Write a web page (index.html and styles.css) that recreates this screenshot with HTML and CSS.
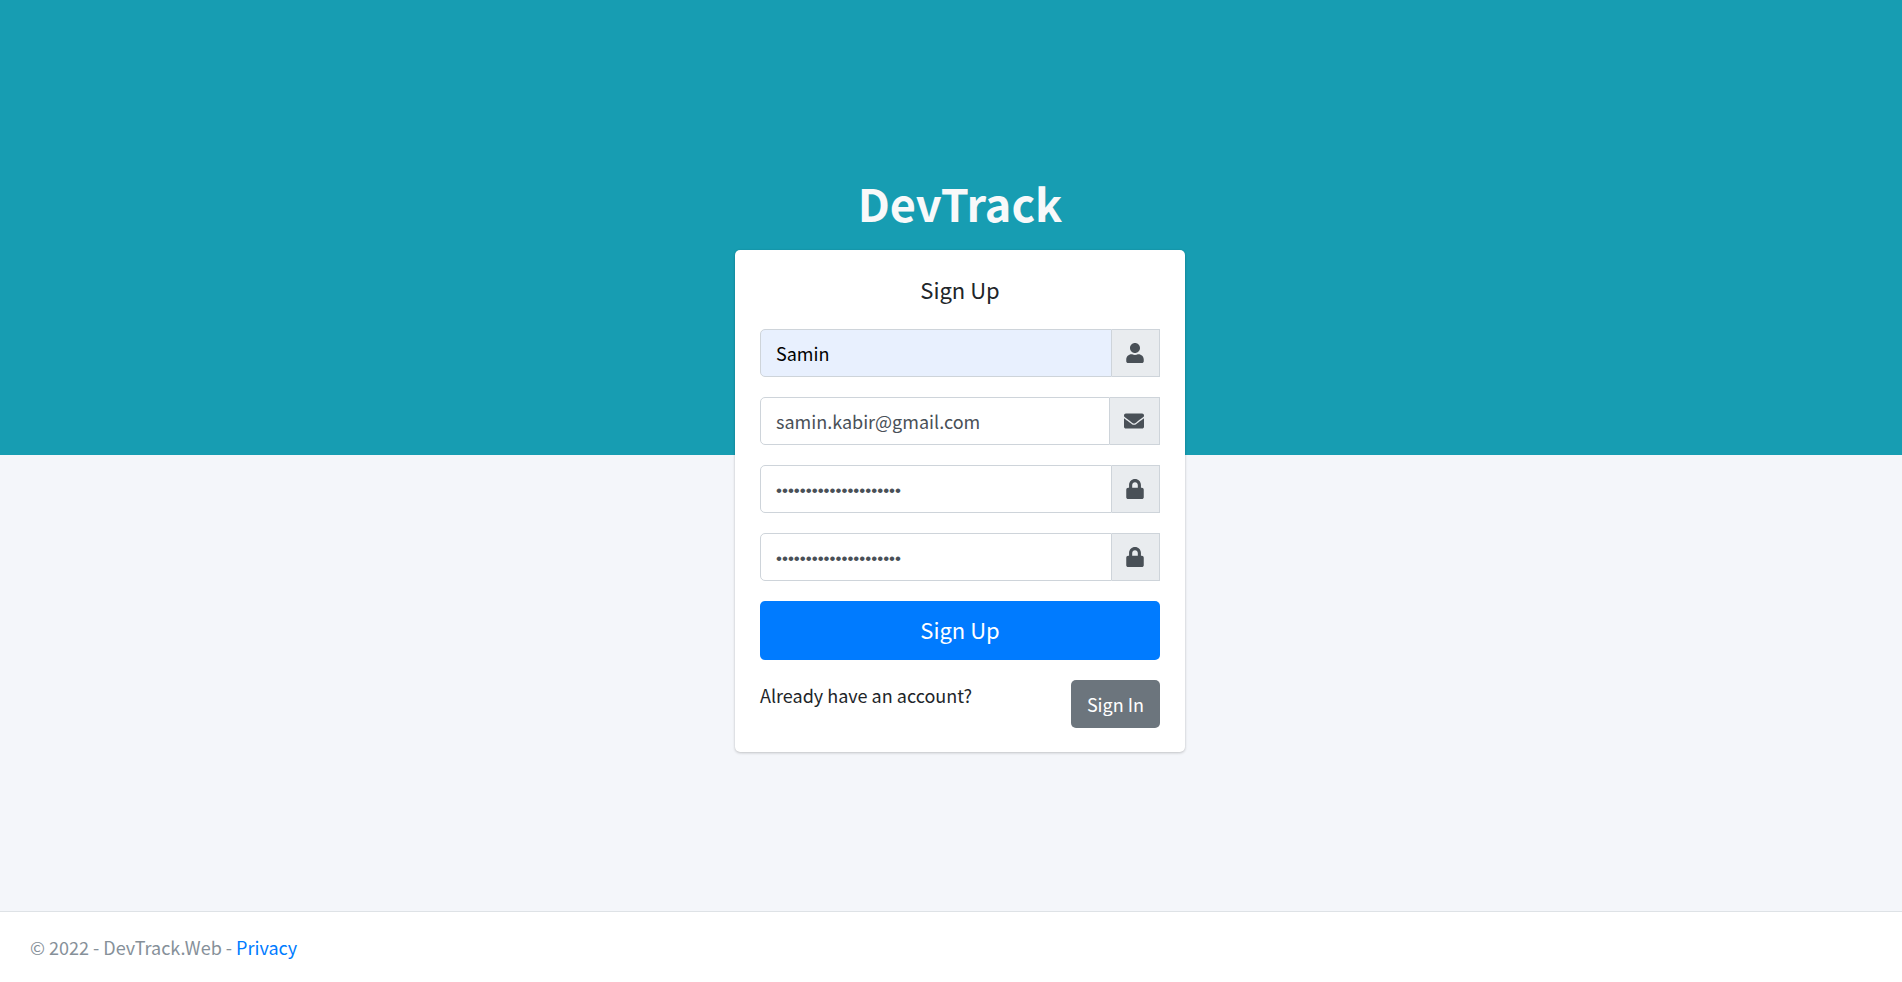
FILE: index.html
```html
<!DOCTYPE html>
<html lang="en">
<head>
  <meta charset="utf-8">
  <meta name="viewport" content="width=device-width, initial-scale=1">
  <title>Sign Up - DevTrack.Web</title>
  <link rel="stylesheet" href="styles.css">
</head>
<body>
  <main class="page">
    <div class="signup">
      <h1 class="brand">DevTrack</h1>
      <section class="card">
        <h2 class="card-title">Sign Up</h2>
        <form class="form">
          <div class="field">
            <input class="field-input field-autofilled" type="text" value="Samin" aria-label="Name">
            <span class="field-icon"><svg class="icon" viewBox="0 0 448 512" aria-hidden="true"><path d="M224 256c70.7 0 128-57.3 128-128S294.7 0 224 0 96 57.3 96 128s57.3 128 128 128zm89.6 32h-16.7c-22.2 10.2-46.9 16-72.9 16s-50.6-5.8-72.9-16h-16.7C60.2 288 0 348.2 0 422.4V464c0 26.5 21.5 48 48 48h352c26.5 0 48-21.5 48-48v-41.6c0-74.2-60.2-134.4-134.4-134.4z"/></svg></span>
          </div>
          <div class="field">
            <input class="field-input" type="email" value="samin.kabir@gmail.com" aria-label="Email">
            <span class="field-icon"><svg class="icon icon-wide" viewBox="0 0 512 512" aria-hidden="true"><path d="M502.3 190.8c3.9-3.1 9.7-.2 9.7 4.7V400c0 26.5-21.5 48-48 48H48c-26.5 0-48-21.5-48-48V195.6c0-5 5.7-7.8 9.7-4.7 22.4 17.4 52.1 39.5 154.1 113.6 21.1 15.4 56.7 47.8 92.2 47.6 35.7.3 72-32.8 92.3-47.6 102-74.1 131.6-96.3 154-113.7zM256 320c23.2.4 56.6-29.2 73.4-41.4 132.7-96.3 142.8-104.7 173.4-128.7 5.8-4.5 9.2-11.5 9.2-18.9v-19c0-26.5-21.5-48-48-48H48c-26.5 0-48 21.5-48 48v19c0 7.4 3.4 14.3 9.2 18.9 30.6 23.9 40.7 32.4 173.4 128.7 16.8 12.2 50.2 41.8 73.4 41.4z"/></svg></span>
          </div>
          <div class="field">
            <input class="field-input field-password" type="password" value="devtrack-password-022" aria-label="Password">
            <span class="field-icon"><svg class="icon" viewBox="0 0 448 512" aria-hidden="true"><path d="M400 224h-24v-72C376 68.2 307.8 0 224 0S72 68.2 72 152v72H48c-26.5 0-48 21.5-48 48v192c0 26.5 21.5 48 48 48h352c26.5 0 48-21.5 48-48V272c0-26.5-21.5-48-48-48zm-104 0H152v-72c0-39.7 32.3-72 72-72s72 32.3 72 72v72z"/></svg></span>
          </div>
          <div class="field">
            <input class="field-input field-password" type="password" value="devtrack-password-022" aria-label="Confirm password">
            <span class="field-icon"><svg class="icon" viewBox="0 0 448 512" aria-hidden="true"><path d="M400 224h-24v-72C376 68.2 307.8 0 224 0S72 68.2 72 152v72H48c-26.5 0-48 21.5-48 48v192c0 26.5 21.5 48 48 48h352c26.5 0 48-21.5 48-48V272c0-26.5-21.5-48-48-48zm-104 0H152v-72c0-39.7 32.3-72 72-72s72 32.3 72 72v72z"/></svg></span>
          </div>
          <button class="btn btn-primary" type="submit">Sign Up</button>
          <div class="signin">
            <span>Already have an account?</span>
            <a class="btn btn-secondary" href="#signin">Sign In</a>
          </div>
        </form>
      </section>
    </div>
  </main>
  <footer class="footer">© 2022 - DevTrack.Web - <a class="footer-link" href="#privacy">Privacy</a></footer>
</body>
</html>
```
FILE: styles.css
```css
* {
  box-sizing: border-box;
}

body {
  display: flex;
  flex-direction: column;
  min-height: 100vh;
  margin: 0;
  background: #f4f6fa;
  color: #212529;
  font-family: "Source Sans Pro", "Noto Sans CJK SC", "Noto Sans", sans-serif;
  font-size: 18px;
  line-height: 30px;
}

.page {
  flex: 1;
  display: flex;
  align-items: center;
  justify-content: center;
  padding: 24px 0 24px 18px;
  background: linear-gradient(#179db2 50%, #f4f6fa 50%);
}

.signup {
  width: 450px;
  max-width: 100%;
}

.brand {
  margin: 0;
  padding-bottom: 3px;
  color: #f8f9fa;
  font-size: 45px;
  font-weight: 700;
  line-height: 88px;
  text-align: center;
}

.card {
  padding: 24px 25px;
  border-radius: 5px;
  background: #fff;
  box-shadow: 0 0 1px rgba(0, 0, 0, .13), 0 1px 3px rgba(0, 0, 0, .2);
}

.card-title {
  margin: 0 0 24px;
  font-size: 22px;
  font-weight: 400;
  line-height: 31px;
  text-align: center;
}

.form {
  display: flex;
  flex-direction: column;
  gap: 20px;
}

.field {
  display: flex;
  height: 48px;
}

.field-input {
  flex: 1;
  min-width: 0;
  padding: 0 15px;
  border: 1px solid #ced4da;
  border-radius: 5px 0 0 5px;
  background: #fff;
  color: #495057;
  font: inherit;
}

.field-autofilled {
  background: #e8f0fe;
  color: #000;
}

.field-password {
  padding-top: 4px;
  font-family: "Liberation Sans", sans-serif;
  font-size: 17px;
}

.field-icon {
  display: flex;
  align-items: center;
  padding: 0 15px 0 14px;
  border: 1px solid #ced4da;
  border-left: 0;
  background: #e9ecef;
  color: #495057;
}

.icon {
  width: 18px;
  height: 20px;
  fill: currentColor;
}

.icon-wide {
  width: 20px;
}

.btn {
  border: 0;
  border-radius: 5px;
  color: #fff;
  font-family: inherit;
  text-align: center;
  text-decoration: none;
  cursor: pointer;
}

.btn-primary {
  padding: 11px 20px 14px;
  background: #007bff;
  font-size: 22px;
  line-height: 34px;
}

.btn-secondary {
  padding: 9px 16px;
  background: #6c757d;
}

.signin {
  display: flex;
  align-items: flex-start;
  justify-content: space-between;
}

.footer {
  padding: 20px 30px;
  border-top: 1px solid #dee2e6;
  background: #fff;
  color: #869099;
}

.footer-link {
  color: #007bff;
  text-decoration: none;
}
```
